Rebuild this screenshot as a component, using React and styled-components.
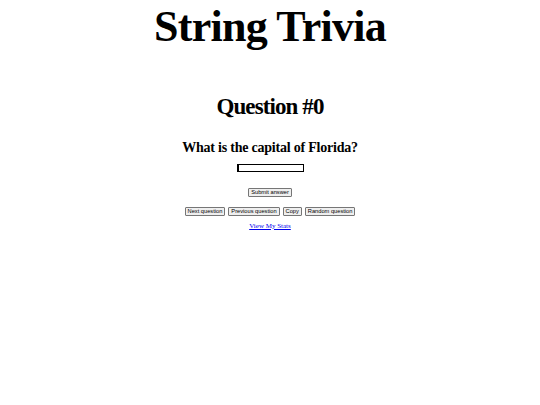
import React, { useState } from "react";
import styled, { createGlobalStyle } from "styled-components";

/* page reset: the page is white with serif text */
const GlobalStyle = createGlobalStyle`
  html, body {
    margin: 0;
    padding: 0;
    background: #ffffff;
  }
  body {
    font-family: "Liberation Serif", "Times New Roman", serif;
    color: #000000;
  }
`;

const Page = styled.main`
  display: flex;
  flex-direction: column;
  align-items: center;
  text-align: center;
`;

const Title = styled.h1`
  margin: 2px 0 0 0;
  font-size: 44px;
  line-height: 50px;
  letter-spacing: -0.75px;
  font-weight: bold;
`;

const QuestionNumber = styled.h2`
  margin: 41px 0 0 0;
  font-size: 23px;
  line-height: 28px;
  letter-spacing: -0.9px;
  font-weight: bold;
`;

const QuestionText = styled.h3`
  margin: 19px 0 0 0;
  font-size: 14px;
  line-height: 16px;
  letter-spacing: -0.22px;
  font-weight: bold;
`;

const AnswerInput = styled.input`
  box-sizing: border-box;
  margin-top: 8px;
  width: 67px;
  height: 8px;
  padding: 0;
  border: 1px solid #000000;
  border-left-width: 2px;
  font-size: 6px;
`;

const ButtonRow = styled.div`
  display: flex;
  justify-content: center;
  gap: 3px;
  margin-top: ${(p) => p.top}px;
`;

const Button = styled.button`
  box-sizing: border-box;
  height: 9px;
  padding: 0 2px;
  margin: 0;
  font-family: "Liberation Sans", Arial, sans-serif;
  font-size: 5.7px;
  line-height: 7px;
  color: #000000;
  background: #efefef;
  border: 1px solid #767676;
  border-radius: 1px;
  cursor: pointer;
  &:hover {
    background: #e5e5e5;
  }
`;

const StatsLink = styled.a`
  margin-top: 6px;
  font-size: 7px;
  line-height: 8px;
  color: #0000ee;
  text-decoration: underline;
`;

const questions = [
  "What is the capital of Florida?",
  "What is the capital of Texas?",
  "What is the capital of Ohio?",
];

export default function App() {
  const [index, setIndex] = useState(0);
  const [answer, setAnswer] = useState("");

  const next = () => setIndex((i) => (i + 1) % questions.length);
  const prev = () => setIndex((i) => (i - 1 + questions.length) % questions.length);
  const random = () => setIndex(Math.floor(Math.random() * questions.length));

  return (
    <Page>
      <GlobalStyle />
      <Title>String Trivia</Title>
      <QuestionNumber>Question #{index}</QuestionNumber>
      <QuestionText>{questions[index]}</QuestionText>
      <AnswerInput value={answer} onChange={(e) => setAnswer(e.target.value)} />
      <ButtonRow top={16}>
        <Button>Submit answer</Button>
      </ButtonRow>
      <ButtonRow top={10}>
        <Button onClick={next}>Next question</Button>
        <Button onClick={prev}>Previous question</Button>
        <Button>Copy</Button>
        <Button onClick={random}>Random question</Button>
      </ButtonRow>
      <StatsLink href="#">View My Stats</StatsLink>
    </Page>
  );
}
